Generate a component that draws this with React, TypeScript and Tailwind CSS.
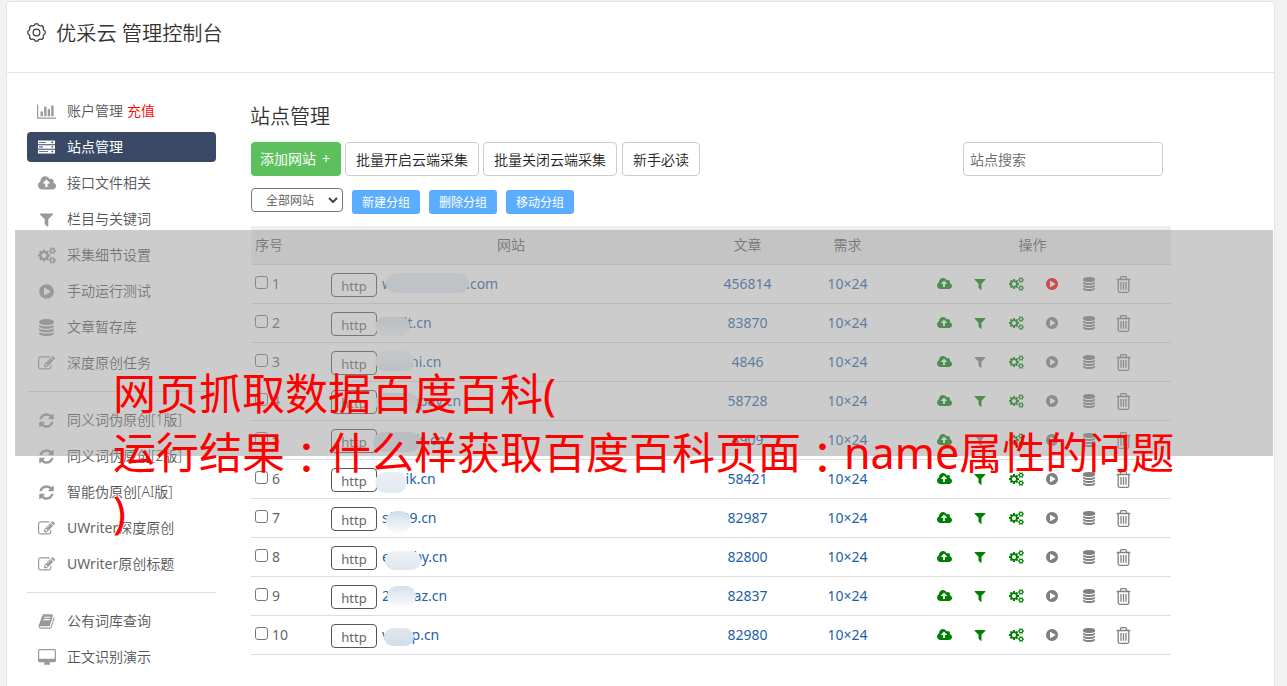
import type { ReactNode } from 'react';
import clsx from 'clsx';

type IconProps = { className?: string };

type GlyphProps = {
  className?: string;
  viewBox?: string;
  d: string;
};

function Glyph({ className, viewBox = '0 0 1792 1792', d }: GlyphProps) {
  return (
    <svg className={className} viewBox={viewBox} fill="currentColor">
      <path d={d} />
    </svg>
  );
}

const WIDE = '-64 0 1920 1792';

const smallGear =
  'v140q0 16-149 31-12 27-30 52 51 113 51 138 0 4-4 7-122 71-124 71-8 0-46-47t-52-68q-20 2-30 2t-30-2q-14 21-52 68t-46 47q-2 0-124-71-4-3-4-7 0-25 51-138-18-25-30-52-149-15-149-31v-140q0-16 149-31 13-29 30-52-51-113-51-138 0-4 4-7 4-2 35-20t59-34 30-16q8 0 46 46.5t52 67.5q20-2 30-2t30 2q51-71 92-112l6-2q4 0 124 70 4 3 4 7 0 25-51 138 17 23 30 52 149 15 149 31z';

const paths = {
  chart:
    'M640 896v512h-256v-512h256zm384-512v1024h-256v-1024h256zm1024 1152v128h-2048v-1536h128v1408h1920zm-640-896v768h-256v-768h256zm384-384v1152h-256v-1152h256z',
  cloud:
    'M1216 864q0-14-9-23l-352-352q-9-9-23-9t-23 9l-351 351q-10 12-10 24 0 14 9 23t23 9h224v352q0 13 9.5 22.5t22.5 9.5h192q13 0 22.5-9.5t9.5-22.5v-352h224q13 0 22.5-9.5t9.5-22.5zm640 288q0 159-112.5 271.5t-271.5 112.5h-1088q-185 0-316.5-131.5t-131.5-316.5q0-130 70-240t188-165q-2-30-2-43 0-212 150-362t362-150q156 0 285.5 87t188.5 231q71-62 166-62 106 0 181 75t75 181q0 76-41 138 130 31 213.5 135.5t83.5 238.5z',
  filter:
    'M1595 295q17 41-14 70l-493 493v742q0 42-39 59-13 5-25 5-27 0-45-19l-256-256q-19-19-19-45v-486l-493-493q-31-29-14-70 17-39 59-39h1280q42 0 59 39z',
  cogs:
    'M832 896q0-106-75-181t-181-75-181 75-75 181 75 181 181 75 181-75 75-181zm768 512q0-52-38-90t-90-38-90 38-38 90q0 53 37.5 90.5t90.5 37.5 90.5-37.5 37.5-90.5zm0-1024q0-52-38-90t-90-38-90 38-38 90q0 53 37.5 90.5t90.5 37.5 90.5-37.5 37.5-90.5zm-384 421v185q0 10-7 19.5t-16 10.5l-155 24q-11 35-32 76 34 48 90 115 7 11 7 20 0 12-7 19-23 30-82.5 89.5t-78.5 59.5q-11 0-21-7l-115-90q-37 19-77 31-11 108-23 155-7 24-30 24h-186q-11 0-20-7.5t-10-17.5l-23-153q-34-10-75-31l-118 89q-7 7-20 7-11 0-21-8-144-133-144-160 0-9 7-19 10-14 41-53t47-61q-23-44-35-82l-152-24q-10-1-17-9.5t-7-19.5v-185q0-10 7-19.5t16-10.5l155-24q11-35 32-76-34-48-90-115-7-11-7-20 0-12 7-20 22-30 82-89t79-59q11 0 21 7l115 90q34-18 77-32 11-108 23-154 7-24 30-24h186q11 0 20 7.5t10 17.5l23 153q34 10 75 31l118-89q8-7 20-7 11 0 21 8 144 133 144 160 0 8-7 19-12 16-42 54t-45 60q23 48 34 82l152 23q10 2 17 10.5t7 19.5zm640 533' +
    smallGear +
    'm0-1024' +
    smallGear,
  play:
    'M896 128q209 0 385.5 103t279.5 279.5 103 385.5-103 385.5-279.5 279.5-385.5 103-385.5-103-279.5-279.5-103-385.5 103-385.5 279.5-279.5 385.5-103zm384 823q32-18 32-55t-32-55l-544-320q-31-19-64-1-32 19-32 56v640q0 37 32 56 16 8 32 8 17 0 32-9z',
  database:
    'M896 768q237 0 443-43t325-127v170q0 69-103 128t-280 93.5-385 34.5-385-34.5-280-93.5-103-128v-170q119 84 325 127t443 43zm0 768q237 0 443-43t325-127v170q0 69-103 128t-280 93.5-385 34.5-385-34.5-280-93.5-103-128v-170q119 84 325 127t443 43zm0-384q237 0 443-43t325-127v170q0 69-103 128t-280 93.5-385 34.5-385-34.5-280-93.5-103-128v-170q119 84 325 127t443 43zm0-1152q208 0 385 34.5t280 93.5 103 128v128q0 69-103 128t-280 93.5-385 34.5-385-34.5-280-93.5-103-128v-128q0-69 103-128t280-93.5 385-34.5z',
  edit:
    'M888 1184l116-116-152-152-116 116v56h96v96h56zm440-720q-16-16-33 1l-350 350q-17 17-1 33t33-1l350-350q17-17 1-33zm80 594v190q0 119-84.5 203.5t-203.5 84.5h-832q-119 0-203.5-84.5t-84.5-203.5v-832q0-119 84.5-203.5t203.5-84.5h832q63 0 117 25 15 7 18 23 3 17-9 29l-49 49q-14 14-32 8-23-6-45-6h-832q-66 0-113 47t-47 113v832q0 66 47 113t113 47h832q66 0 113-47t47-113v-126q0-13 9-22l64-64q15-15 35-7t20 29zm-96-738l288 288-672 672h-288v-288zm444 132l-92 92-288-288 92-92q28-28 68-28t68 28l152 152q28 28 28 68t-28 68z',
  refresh:
    'M1639 1056q0 5-1 7-64 268-268 434.5t-478 166.5q-146 0-282.5-55t-243.5-157l-129 129q-19 19-45 19t-45-19-19-45v-448q0-26 19-45t45-19h448q26 0 45 19t19 45-19 45l-137 137q71 66 161 102t187 36q134 0 250-65t186-179q11-17 53-117 8-23 30-23h192q13 0 22.5 9.5t9.5 22.5zm25-800v448q0 26-19 45t-45 19h-448q-26 0-45-19t-19-45 19-45l138-138q-148-137-349-137-134 0-250 65t-186 179q-11 17-53 117-8 23-30 23h-199q-13 0-22.5-9.5t-9.5-22.5v-7q65-268 270-434.5t480-166.5q146 0 284 55.5t245 156.5l130-129q19-19 45-19t45 19 19 45z',
  book:
    'M1703 478q40 57 18 129l-275 906q-19 64-76.5 107.5t-122.5 43.5h-923q-77 0-148.5-53.5t-99.5-131.5q-24-67-2-127 0-4 3-27t4-37q1-8-3-21.5t-3-19.5q2-11 8-21t16.5-23.5 16.5-23.5q23-38 45-91.5t30-91.5q3-10 .5-30t-.5-28q3-11 17-28t17-23q21-36 42-92t25-90q1-9-2.5-32t.5-28q4-13 22-30.5t22-22.5q19-26 42.5-84.5t27.5-96.5q1-8-3-25.5t-2-26.5q2-8 9-18t18-23 17-21q8-12 16.5-30.5t15-35 16-36 19.5-32 26.5-23.5 36-11.5 47.5 5.5l-1 3q38-9 51-9h761q74 0 114 56t18 130l-274 906q-36 119-71.5 153.5t-128.5 34.5h-869q-27 0-38 15-11 16-1 43 24 70 144 70h923q29 0 56-15.5t35-41.5l300-987q7-22 5-57 38 15 59 43zm-1064 2q-4 13 2 22.5t20 9.5h608q13 0 25.5-9.5t16.5-22.5l21-64q4-13-2-22.5t-20-9.5h-608q-13 0-25.5 9.5t-16.5 22.5zm-83 256q-4 13 2 22.5t20 9.5h608q13 0 25.5-9.5t16.5-22.5l21-64q4-13-2-22.5t-20-9.5h-608q-13 0-25.5 9.5t-16.5 22.5z',
  desktop:
    'M1728 992v-832q0-13-9.5-22.5t-22.5-9.5h-1600q-13 0-22.5 9.5t-9.5 22.5v832q0 13 9.5 22.5t22.5 9.5h1600q13 0 22.5-9.5t9.5-22.5zm128-832v1088q0 66-47 113t-113 47h-544q0 37 16 77.5t32 71 16 43.5q0 26-19 45t-45 19h-512q-26 0-45-19t-19-45q0-14 16-44t32-70 16-78h-544q-66 0-113-47t-47-113v-1088q0-66 47-113t113-47h1600q66 0 113 47t47 113z',
};

function ServerIcon({ className }: IconProps) {
  return (
    <svg className={className} viewBox="0 0 17 14" fill="currentColor">
      <path
        fillRule="evenodd"
        d="M0 .6h17v3.6H0zM1 2v.8h7V2zM13.5 1.6v1.4h1.6V1.6zM0 5.2h17v3.6H0zM1 6.6v.8h4v-.8zM13.5 6.2v1.4h1.6V6.2zM0 9.8h17v3.6H0zM1 11.2v.8h9v-.8zM13.5 10.8v1.4h1.6v-1.4z"
      />
    </svg>
  );
}

function TrashIcon({ className }: IconProps) {
  return (
    <svg className={className} viewBox="0 0 15 17" fill="none" stroke="currentColor" strokeWidth="1.3">
      <path d="M.7 3.5h13.6M4.5 3.4V2Q4.5.7 5.7.7h3.6Q10.5.7 10.5 2v1.4M2.2 3.8v11q0 1.5 1.4 1.5h7.8q1.4 0 1.4-1.5v-11M5 6v7.7M7.5 6v7.7M10 6v7.7" />
    </svg>
  );
}

function SettingsIcon({ className }: IconProps) {
  return (
    <svg className={className} viewBox="0 0 18 18" fill="none" stroke="currentColor" strokeWidth="1.1" strokeLinejoin="round">
      <circle cx="9" cy="9" r="3.2" />
      <path d="M7.2 2L7.8.8h2.4L10.8 2L12.7 2.8L14 2.4L15.6 4L15.2 5.3L16 7.2L17.2 7.8v2.4L16 10.8L15.2 12.7L15.6 14L14 15.6L12.7 15.2L10.8 16L10.2 17.2H7.8L7.2 16L5.3 15.2L4 15.6L2.4 14L2.8 12.7L2 10.8L.8 10.2V7.8L2 7.2L2.8 5.3L2.4 4L4 2.4L5.3 2.8z" />
    </svg>
  );
}

type MenuEntry = { label: string; icon: ReactNode; prefix?: string; badge?: string; active?: boolean };

const edit = <Glyph d={paths.edit} className="size-[17px]" />;
const refresh = <Glyph d={paths.refresh} className="size-[17px]" />;

const menuGroups: MenuEntry[][] = [
  [
    { label: '账户管理', badge: '充值', icon: <Glyph d={paths.chart} viewBox="0 0 2048 1792" className="h-[17px] w-[19px]" /> },
    { label: '站点管理', icon: <ServerIcon className="h-[14px] w-[17px]" />, active: true },
    { label: '接口文件相关', icon: <Glyph d={paths.cloud} viewBox={WIDE} className="h-[17px] w-[18px]" /> },
    { label: '栏目与关键词', icon: <Glyph d={paths.filter} className="size-[17px]" /> },
    { label: '采集细节设置', icon: <Glyph d={paths.cogs} viewBox={WIDE} className="h-[17px] w-[18px]" /> },
    { label: '手动运行测试', icon: <Glyph d={paths.play} className="size-[17px]" /> },
    { label: '文章暂存库', icon: <Glyph d={paths.database} className="size-[17px]" /> },
    { label: '深度原创任务', icon: edit },
  ],
  [
    { label: '同义词伪原创[1版]', icon: refresh },
    { label: '同义词伪原创[2版]', icon: refresh },
    { label: '智能伪原创[AI版]', icon: refresh },
    { prefix: 'UWriter', label: '深度原创', icon: edit },
    { prefix: 'UWriter', label: '原创标题', icon: edit },
  ],
  [
    { label: '公有词库查询', icon: <Glyph d={paths.book} className="size-[17px]" /> },
    { label: '正文识别演示', icon: <Glyph d={paths.desktop} viewBox={WIDE} className="h-[17px] w-[18px]" /> },
  ],
];

type Site = {
  host: string;
  articles: number;
  // smudge that hides the middle of the host name
  mask: string;
  running?: boolean;
  noFilter?: boolean;
};

const sites: Site[] = [
  { host: 'wwwwwwwlr.com', articles: 456814, running: true, mask: 'left-[4px] top-[3px] w-[83px] h-[20px] from-[#e9edf3] to-[#e4ebf3]' },
  { host: 'calilt.cn', articles: 83870, mask: '-left-[7px] top-[8px] w-[35px] h-[19px] from-[#dce3ea] to-[#f3f5f5]' },
  { host: 'acccni.cn', articles: 4846, noFilter: true, mask: '-left-[7px] top-[3px] w-[39px] h-[20px] from-[#f3f4f5] to-[#dfe8f0]' },
  { host: 'aaccapay.cn', articles: 58728, mask: '-left-[7px] top-[6px] w-[43px] h-[19px] from-[#dde4eb] to-[#f5f6f6]' },
  { host: 'aaacils.cn', articles: 4909, noFilter: true, mask: '-left-[9px] top-[6px] w-[48px] h-[20px] from-[#dbe2ea] to-[#dce4ec]' },
  { host: 'aaaik.cn', articles: 58421, mask: '-left-[7px] top-[7px] w-[32px] h-[21px] from-[#e9eef4] to-[#e4eaf2]' },
  { host: 'sfa39.cn', articles: 82987, mask: 'left-[4px] top-[7px] w-[25px] h-[22px] from-[#cfdde9] to-[#fbfbfc]' },
  { host: 'eaaaby.cn', articles: 82800, mask: 'left-[3px] top-[8px] w-[36px] h-[19px] from-[#eff2f6] to-[#dfe6ee]' },
  { host: '2aaaaz.cn', articles: 82837, mask: 'left-[5px] top-[4px] w-[29px] h-[21px] from-[#d5e0ea] to-[#fafbfc]' },
  { host: 'vaacp.cn', articles: 82980, mask: 'left-[2px] top-[7px] w-[30px] h-[18px] from-[#e3e7ec] to-[#d0deeb]' },
];

const columns = 'grid grid-cols-[80px_366px_101px_99px_274px]';

function SiteRow({ site, index }: { site: Site; index: number }) {
  return (
    <div className={clsx(columns, 'h-[39px] items-center border-b border-[#ddd] font-normal text-[#666]')}>
      <div className="flex items-center gap-1 pl-1">
        <span className="mb-[3px] size-[13px] rounded-[3px] border border-[#767676] bg-white" />
        <span>{index}</span>
      </div>
      <div className="flex h-full items-start">
        <span className="mt-2 h-6 w-[46px] shrink-0 rounded border border-[#555] bg-white text-center text-[13px] leading-[25px]">
          http
        </span>
        <span className="relative ml-[5px] leading-[38px] whitespace-nowrap text-[#1c60a8]">
          {site.host}
          <span className={clsx('absolute rounded-[11px] bg-linear-to-b', site.mask, 'mt-[5px]')} />
        </span>
      </div>
      <div className="text-center text-[#1c60a8]">{site.articles}</div>
      <div className="text-center text-[#1c60a8]">10×24</div>
      <div className="flex items-center pl-[29px] text-[#808080]">
        <span className="flex w-9 justify-center text-[#008000]">
          <Glyph d={paths.cloud} viewBox={WIDE} className="h-[14px] w-[15px]" />
        </span>
        <span className={clsx('flex w-9 justify-center', !site.noFilter && 'text-[#008000]')}>
          <Glyph d={paths.filter} className="size-[14px]" />
        </span>
        <span className="flex w-9 justify-center text-[#008000]">
          <Glyph d={paths.cogs} viewBox={WIDE} className="h-[14px] w-[15px]" />
        </span>
        <span className={clsx('flex w-9 justify-center', site.running && 'text-[#ff0000]')}>
          <Glyph d={paths.play} className="size-[14px]" />
        </span>
        <span className="flex w-9 justify-center pl-px">
          <Glyph d={paths.database} className="size-[14px]" />
        </span>
        <span className="flex w-[35px] justify-center">
          <TrashIcon className="h-[17px] w-[15px]" />
        </span>
      </div>
    </div>
  );
}

function Sidebar() {
  return (
    <nav className="w-[189px] shrink-0 pt-[23px]">
      {menuGroups.map((group, i) => (
        <div key={i} className={clsx('flex flex-col gap-1.5', i > 0 && 'mt-[13px] border-t border-[#ddd] pt-[13px]')}>
          {group.map((item, j) => (
            <div
              key={j}
              className={clsx(
                'flex h-[30px] items-center rounded pl-[9px] text-sm',
                item.active && 'bg-[#3a4a66] font-normal text-white'
              )}
            >
              <span className={clsx('mr-[10px] flex w-[21px] justify-center', item.active ? 'text-white' : 'text-[#999]')}>
                {item.icon}
              </span>
              <span className="whitespace-nowrap">
                {item.prefix && <span className="font-normal text-[#666]">{item.prefix}</span>}
                {item.label}
              </span>
              {item.badge && <span className="ml-1 text-[#ff0000]">{item.badge}</span>}
            </div>
          ))}
        </div>
      ))}
    </nav>
  );
}

function Toolbar() {
  const plain = 'flex h-[34px] items-center justify-center rounded border border-[#ccc] bg-white pt-px text-sm text-[#222]';
  const small = 'flex h-6 w-[68px] items-center justify-center rounded-[3px] bg-[#5badff] pt-px text-xs font-normal text-white';
  return (
    <>
      <div className="mt-[10px] flex">
        <div className="flex h-[34px] w-[90px] items-center rounded bg-[#5cc05c] pl-[9px] text-sm font-normal text-white">
          <span>添加网站</span>
          <span className="ml-[6px]">+</span>
        </div>
        <div className={clsx(plain, 'ml-1 w-[134px]')}>批量开启云端采集</div>
        <div className={clsx(plain, 'ml-1 w-[134px]')}>批量关闭云端采集</div>
        <div className={clsx(plain, 'ml-[5px] w-[78px]')}>新手必读</div>
        <div className="ml-[263px] flex h-[34px] w-[200px] items-center rounded border border-[#ccc] pt-px pl-1.5 text-sm text-[#666]">
          站点搜索
        </div>
      </div>
      <div className="mt-3 flex items-start">
        <div className="flex h-6 w-[92px] items-center rounded border border-[#767676] bg-white pl-[14px] text-xs">
          <span className="pt-px">全部网站</span>
          <svg className="ml-[14px] h-[6px] w-[10px]" viewBox="0 0 10 6" fill="none" stroke="#444" strokeWidth="2">
            <path d="M1 1l4 4 4-4" />
          </svg>
        </div>
        <div className="mt-0.5 ml-[9px] flex gap-[9px]">
          <div className={small}>新建分组</div>
          <div className={small}>删除分组</div>
          <div className={small}>移动分组</div>
        </div>
      </div>
    </>
  );
}

function Banner() {
  const colon = (
    <span className="relative top-[5px] font-['Noto_Sans_CJK_TC',sans-serif] leading-none">：</span>
  );
  return (
    <div className="absolute top-[230px] left-[15px] h-[226px] w-[1258px] bg-[#999]/50">
      <div className="absolute top-[134px] left-[98px] text-[43px] leading-[59px] font-normal whitespace-nowrap text-[#ff0000]">
        <div className="h-[59px]">网页抓取数据百度百科(</div>
        <div className="h-[59px]">
          运行结果{colon}什么样获取百度百科页面{colon}name属性的问题
        </div>
        <div className="h-[59px]">)</div>
      </div>
    </div>
  );
}

export default function App() {
  return (
    <div className="relative h-[686px] w-[1287px] overflow-hidden bg-[#f1f1f1] px-1.5 pt-px font-['Noto_Sans','Noto_Sans_CJK_SC',sans-serif] font-[350] text-[#555]">
      <div className="h-[720px] w-[1269px] rounded-t border border-[#e4e4e4] bg-white">
        <header className="flex h-[71px] items-center border-b border-[#e5e5e5] pb-[7px] pl-5 text-[20.2px] text-[#333]">
          <SettingsIcon className="mr-[10px] mb-[3px] size-[19px]" />
          优采云 管理控制台
        </header>
        <div className="flex pl-5">
          <Sidebar />
          <main className="ml-[35px] w-[920px] pt-[29px]">
            <h1 className="-ml-px text-xl leading-[30px] text-[#333]">站点管理</h1>
            <Toolbar />
            <div className="mt-3 text-sm">
              <div className={clsx(columns, 'h-[39px] items-center border-b border-[#ddd] bg-[#eee]')}>
                <div className="pl-1">序号</div>
                <div className="pr-[6px] text-center">网站</div>
                <div className="text-center">文章</div>
                <div className="text-center">需求</div>
                <div className="pr-[3px] text-center">操作</div>
              </div>
              {sites.map((site, i) => (
                <SiteRow key={site.host} site={site} index={i + 1} />
              ))}
            </div>
          </main>
        </div>
      </div>
      <Banner />
    </div>
  );
}
